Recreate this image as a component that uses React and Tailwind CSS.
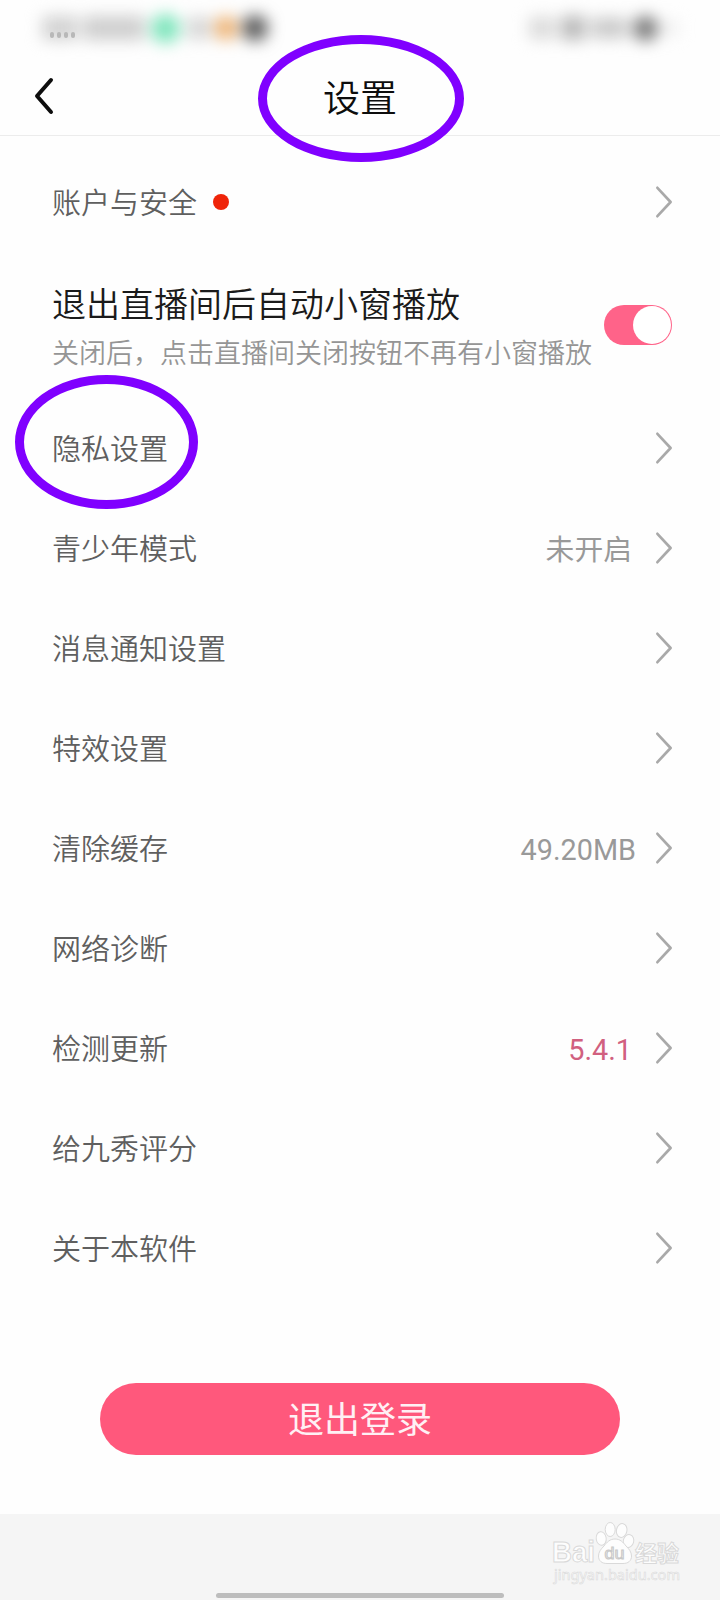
import clsx from "clsx";

const ROWS = [
  { label: "隐私设置", circled: true },
  { label: "青少年模式", value: "未开启" },
  { label: "消息通知设置" },
  { label: "特效设置" },
  { label: "清除缓存", value: "49.20MB", valueClass: "-mr-[4px]" },
  { label: "网络诊断" },
  { label: "检测更新", value: "5.4.1", valueClass: "text-[#d1607f]" },
  { label: "给九秀评分" },
  { label: "关于本软件" },
];

const Chevron = () => (
  <svg
    className="block h-[34px] w-[18px] shrink-0"
    viewBox="0 0 18 34"
    fill="none"
    stroke="#a9a9a9"
    strokeWidth="2.7"
    strokeLinecap="round"
    strokeLinejoin="round"
  >
    <path d="M2.4 2.8 15.6 17 2.4 31.2" />
  </svg>
);

const Circle = ({ className }) => (
  <span
    className={clsx(
      "pointer-events-none absolute z-10 rounded-[50%] border-[9px] border-[#8000ff]",
      className
    )}
  />
);

const StatusBar = () => (
  <div className="relative flex h-[56px] items-center justify-between pr-[42px] pl-[42px]">
    <div className="flex items-center blur-[8px]">
      <span className="h-[24px] w-[36px] rounded bg-[#d2d2d2]" />
      <span className="ml-[5px] h-[24px] w-[62px] rounded bg-[#cecece]" />
      <span className="ml-[6px] size-[29px] rounded-full bg-[#7ee5bc]" />
      <span className="ml-[7px] h-[22px] w-[24px] rounded bg-[#d6d6d6]" />
      <span className="ml-[3px] size-[24px] rounded-full bg-[#edb171]" />
      <span className="ml-[4px] size-[26px] rounded-full bg-[#585858]" />
    </div>
    <div className="flex items-center blur-[8px]">
      <span className="h-[22px] w-[26px] rounded bg-[#dadada]" />
      <span className="ml-[6px] h-[24px] w-[24px] rounded bg-[#b8b8b8]" />
      <span className="ml-[6px] h-[20px] w-[36px] rounded bg-[#c8c8c8]" />
      <span className="ml-[6px] size-[25px] rounded-full bg-[#777777]" />
      <span className="ml-[6px] h-[16px] w-[14px] rounded bg-[#eeeeee]" />
    </div>
    <div className="absolute top-[32px] left-[50px] flex gap-[3px]">
      <span className="h-[6px] w-[4px] rounded-sm bg-[#b8b8b8]" />
      <span className="h-[6px] w-[4px] rounded-sm bg-[#b8b8b8]" />
      <span className="h-[6px] w-[4px] rounded-sm bg-[#b8b8b8]" />
      <span className="h-[6px] w-[4px] rounded-sm bg-[#b8b8b8]" />
    </div>
  </div>
);

const Header = () => (
  <header className="relative flex h-[80px] items-center border-b border-[#ececec]">
    <svg
      className="ml-[32px] block h-[40px] w-[24px]"
      viewBox="0 0 24 40"
      fill="none"
      stroke="#0d0d0d"
      strokeWidth="4"
      strokeLinecap="round"
      strokeLinejoin="round"
    >
      <path d="M19 4 5 20 19 36" />
    </svg>
    <h1 className="mr-[56px] flex-1 pt-[8px] text-center text-[37px] leading-none font-[350] text-[#0d0d0d]">
      设置
    </h1>
    <Circle className="-top-[21px] left-[258px] h-[127px] w-[206px]" />
  </header>
);

const Row = ({ label, value, valueClass, circled, dot }) => (
  <div className="relative flex h-[100px] items-center">
    <span className="pt-[5px] text-[29px] leading-none font-[350] text-[#5f5f5f]">{label}</span>
    {dot && <span className="ml-[16px] size-[16px] rounded-full bg-[#ef2409]" />}
    <span className="flex-1" />
    {value && (
      <span
        className={clsx(
          "pt-[4px] text-[28.8px] leading-none",
          valueClass?.includes("text-") ? "" : "text-[#999999]",
          valueClass
        )}
      >
        {value}
      </span>
    )}
    <span className="ml-[23px]">
      <Chevron />
    </span>
    {circled && <Circle className="-top-[23px] -left-[37px] h-[134px] w-[183px]" />}
  </div>
);

const ToggleRow = () => (
  <div className="flex h-[146px] items-center justify-between">
    <div className="pt-[8px]">
      <p className="text-[34px] leading-[50px] font-[350] text-[#1a1a1a]">
        退出直播间后自动小窗播放
      </p>
      <p className="text-[27px] leading-[48px] font-[350] whitespace-nowrap text-[#959595]">
        关闭后，点击直播间关闭按钮不再有小窗播放
      </p>
    </div>
    <button
      type="button"
      role="switch"
      aria-checked="true"
      className="mr-px flex h-[40px] w-[68px] items-center justify-end rounded-full bg-[#ff6389] pr-px"
    >
      <span className="size-[38px] rounded-full bg-white" />
    </button>
  </div>
);

const Watermark = () => (
  <svg
    className="block h-[74px] w-[140px]"
    viewBox="0 0 140 74"
    fill="#fdfdfd"
    stroke="#d9d9d9"
    strokeWidth="1"
    fontFamily="'Liberation Sans', 'Noto Sans CJK SC', sans-serif"
  >
    <text x="2" y="41" fontSize="29" fontWeight="700" textLength="43" lengthAdjust="spacingAndGlyphs">
      Bai
    </text>
    <ellipse cx="51.2" cy="17.5" rx="5" ry="6.8" transform="rotate(-8 51.2 17.5)" />
    <ellipse cx="60.2" cy="8.5" rx="5" ry="7" />
    <ellipse cx="71.7" cy="9.5" rx="5.2" ry="7" transform="rotate(12 71.7 9.5)" />
    <ellipse cx="78.5" cy="20" rx="5.2" ry="6.5" transform="rotate(14 78.5 20)" />
    <path d="M65 18C60 18 57 21 54 25C51 28 48.500 31 48.500 35C48.500 40 52 42.500 57 42.500H73C78 42.500 81.500 40 81.500 35C81.500 31 79 28 76 25C73 21 70 18 65 18Z" />
    <text x="54.500" y="37.500" fontSize="16" textLength="20" lengthAdjust="spacingAndGlyphs" stroke="#c8c8c8">
      du
    </text>
    <text x="85" y="40" fontSize="22" fontWeight="700">
      经验
    </text>
    <text
      x="4"
      y="59"
      fontSize="15"
      strokeWidth="0.6"
      textLength="126"
      lengthAdjust="spacingAndGlyphs"
      fontFamily="'Noto Sans', sans-serif"
    >
      jingyan.baidu.com
    </text>
  </svg>
);

const App = () => (
  <div className="flex h-[1600px] w-[720px] flex-col overflow-hidden bg-[#fefefe] font-[Roboto,'Noto_Sans_CJK_SC',sans-serif]">
    <StatusBar />
    <Header />
    <main className="flex-1 pt-[16px] pr-[47px] pl-[52px]">
      <Row label="账户与安全" dot />
      <ToggleRow />
      {ROWS.map((row) => (
        <Row key={row.label} {...row} />
      ))}
      <button
        type="button"
        className="mt-[85px] ml-[48px] block h-[72px] w-[520px] rounded-full bg-[#ff587c] pt-[4px] text-[36px] leading-none text-[#fff0f4]"
      >
        退出登录
      </button>
    </main>
    <footer className="relative flex h-[86px] flex-col items-center justify-end bg-[#f5f5f5] pb-[2px]">
      <div className="absolute top-[7px] left-[550px]">
        <Watermark />
      </div>
      <span className="h-[5px] w-[288px] rounded-full bg-[#bdbdbd]" />
    </footer>
  </div>
);

export default App;
